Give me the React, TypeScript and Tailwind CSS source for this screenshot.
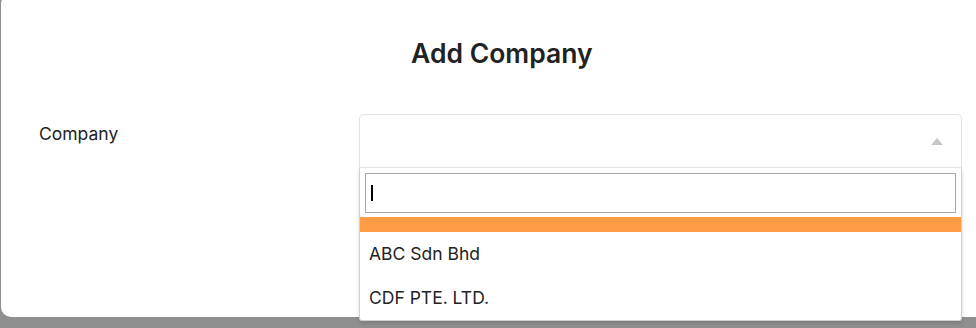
import React from "react";

export default function App() {
  return (
    <div className="w-[976px] h-[328px] overflow-hidden bg-[#8f8f8f] relative" style={{ fontFamily: "Inter, 'Open Sans', sans-serif" }}>
      <div className="ml-[1px] mt-[-6px] w-[1000px] h-[323px] bg-white rounded-[10px] flex flex-col">
        <div className="pt-[41px] pl-[410px] text-[26.5px] font-semibold text-[#222] leading-[36px]">Add Company</div>
        <div className="flex mt-[43px]">
          <div className="ml-[38px] w-[320px] pt-[8px] text-[17.5px] text-[#222] leading-[24px]">Company</div>
          <div className="relative w-[603px]">
            <div className="h-[54px] border border-[#e3e3e3] border-b-[#e8e8e8] rounded-t-[5px] bg-white flex items-center justify-end pr-[17px]">
              <svg width="14" height="9" viewBox="0 0 14 9" className="mt-[1px]">
                <polygon points="7,1 13,8 1,8" fill="#c6c6c6" />
              </svg>
            </div>
            <div className="absolute left-0 top-[54px] w-[603px] bg-white border border-t-0 border-[#d0d0d0] rounded-b-[3px] shadow-[0_2px_4px_rgba(0,0,0,0.15)] z-10">
              <div className="px-[5px] pt-[5px] pb-[4px]">
                <div className="h-[40px] border border-[#a9a9a9] flex items-center pl-[5px]">
                  <div className="w-[2px] h-[16px] bg-black"></div>
                </div>
              </div>
              <div className="h-[15px] bg-[#ff9b45]"></div>
              <div className="h-[42px] flex items-center pl-[9px] pt-[2px] text-[17.5px] text-[#222]">ABC Sdn Bhd</div>
              <div className="h-[46px] flex items-center pl-[9px] pt-[2px] text-[17.5px] text-[#222]">CDF PTE. LTD.</div>
            </div>
          </div>
        </div>
      </div>
    </div>
  );
}
